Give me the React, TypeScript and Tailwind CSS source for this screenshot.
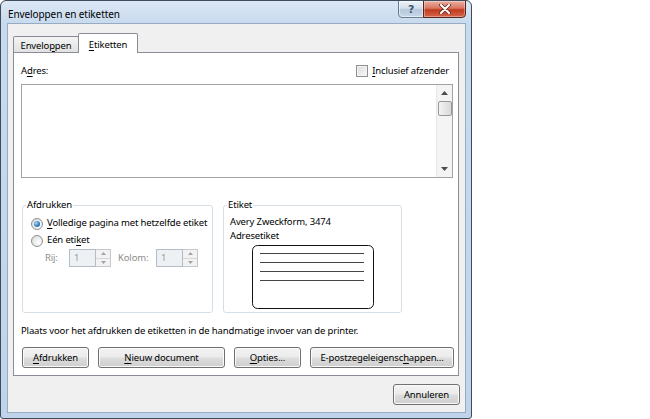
import React from "react";

const U = ({ children }: { children: React.ReactNode }) => (
  <span className="underline underline-offset-[1.5px] decoration-[1px]">{children}</span>
);

function Button({ w, children }: { w: string; children: React.ReactNode }) {
  return (
    <div
      className={`${w} h-[21px] shrink-0 flex items-center justify-center rounded-[3px] border border-[#707070] bg-[linear-gradient(180deg,#f3f3f3_0%,#ebebeb_48%,#dddddd_52%,#cfcfcf_100%)] shadow-[inset_0_0_0_1px_#fafafa] text-black leading-[14px] whitespace-nowrap`}
    >
      <span>{children}</span>
    </div>
  );
}

function Radio({ checked }: { checked?: boolean }) {
  return (
    <span className="w-[12px] h-[12px] shrink-0 rounded-full border border-[#8d8f91] bg-[radial-gradient(circle_at_65%_65%,#ffffff_0%,#e9e9e9_55%,#cfcfcf_100%)] flex items-center justify-center">
      {checked && (
        <span className="w-[6px] h-[6px] rounded-full bg-[radial-gradient(circle_at_35%_35%,#a9dcff_0%,#3b86c9_50%,#174f8c_100%)]" />
      )}
    </span>
  );
}

function Arrow({ up, color = "#4d4d4d" }: { up?: boolean; color?: string }) {
  return (
    <svg width="7" height="4" viewBox="0 0 7 4">
      {up ? <path d="M0 4 L3.5 0 L7 4 Z" fill={color} /> : <path d="M0 0 L3.5 4 L7 0 Z" fill={color} />}
    </svg>
  );
}

function Spin() {
  return (
    <div className="flex h-[18px]">
      <div className="w-[27px] h-full border border-[#b3bdc9] bg-[#eef1f4] text-[#9a9a9a] pl-[4px] flex items-center">1</div>
      <div className="w-[15px] h-full flex flex-col border border-[#c3c8ce] border-l-0 bg-[#f2f2f2]">
        <div className="flex-1 flex items-center justify-center border-b border-[#d3d6da]">
          <svg width="5" height="3" viewBox="0 0 5 3"><path d="M0 3 L2.5 0 L5 3 Z" fill="#a3a3a3" /></svg>
        </div>
        <div className="flex-1 flex items-center justify-center">
          <svg width="5" height="3" viewBox="0 0 5 3"><path d="M0 0 L2.5 3 L5 0 Z" fill="#a3a3a3" /></svg>
        </div>
      </div>
    </div>
  );
}

export default function App() {
  return (
    <div className="w-[650px] h-[419px] bg-white flex font-['Noto_Sans','Open_Sans',sans-serif] text-[9.5px] tracking-[-0.15px] text-black">
      {/* window */}
      <div className="w-[472px] h-[419px] flex flex-col border border-[#3e4b5c] rounded-t-[6px] rounded-b-[3px] overflow-hidden bg-[linear-gradient(180deg,#dce8f5_0px,#c8daee_22px,#bfd4eb_100%)]">
        {/* title bar */}
        <div className="h-[22px] shrink-0 flex items-start justify-between pl-[7px] pr-[5px]">
          <div className="mt-[6px] text-[10px] tracking-[-0.1px] leading-[14px] text-black">Enveloppen en etiketten</div>
          <div className="flex -mt-px">
            <div className="w-[26px] h-[18px] rounded-bl-[4px] border border-[#6a7b92] bg-[linear-gradient(180deg,#eef3f9_0%,#d3deeb_45%,#b7c8dc_55%,#c9d8ea_100%)] flex items-center justify-center shadow-[inset_0_0_0_1px_rgba(255,255,255,0.5)]">
              <span className="font-['DejaVu_Sans',sans-serif] font-bold text-[11px] leading-none text-[#3f5470]">?</span>
            </div>
            <div className="w-[43px] h-[18px] -ml-px rounded-br-[4px] border border-[#5a241b] bg-[linear-gradient(180deg,#eab0a3_0%,#d9755f_45%,#c13a1f_55%,#d4664a_100%)] flex items-center justify-center shadow-[inset_0_0_0_1px_rgba(255,255,255,0.35)]">
              <svg width="12" height="10" viewBox="0 0 12 10">
                <path d="M2 1 L10 9 M10 1 L2 9" stroke="#5b2015" strokeWidth="3.6" strokeLinecap="round" />
                <path d="M2 1 L10 9 M10 1 L2 9" stroke="#ffffff" strokeWidth="2.2" strokeLinecap="round" />
              </svg>
            </div>
          </div>
        </div>

        {/* client area */}
        <div className="flex-1 ml-[6px] mr-[5px] mb-[5px] border border-[#98abc2] bg-[#f0f0f0] flex flex-col pt-[9px] pl-[5px] pr-[6px]">
          {/* tabs */}
          <div className="h-[19px] flex items-end">
            <div className="w-[66px] h-[16px] border border-b-0 border-[#898c95] rounded-t-[2px] bg-[linear-gradient(180deg,#f4f4f4,#e2e2e2)] flex items-center justify-center pt-px leading-[13px]">
              <span>
                Envelo<U>p</U>pen
              </span>
            </div>
            <div className="relative z-10 -ml-px w-[60px] h-[20px] -mb-px border border-b-0 border-[#898c95] rounded-t-[2px] bg-white flex items-center justify-center pt-[2px] leading-[13px]">
              <span>
                <U>E</U>tiketten
              </span>
            </div>
          </div>

          {/* panel */}
          <div className="h-[324px] border border-[#898c95] bg-white flex flex-col pl-[7px] pr-[5px] pt-[11px]">
            <div className="h-[14px] flex items-center justify-between leading-[14px]">
              <span>
                A<U>d</U>res:
              </span>
              <div className="flex items-center gap-[4px] mr-[4px]">
                <span className="w-[12px] h-[12px] border border-[#8e8f8f] bg-[linear-gradient(135deg,#dcdcdc,#f9f9f9)] shadow-[inset_0_0_0_1px_#f4f4f4]" />
                <span>
                  <U>I</U>nclusief afzender
                </span>
              </div>
            </div>

            {/* textarea */}
            <div className="mt-[6px] h-[94px] border border-[#a3a3a3] bg-white flex justify-end">
              <div className="w-[16px] h-full bg-[#f4f4f4] border-l border-[#e6e6e6] flex flex-col items-center">
                <div className="h-[16px] flex items-center justify-center">
                  <Arrow up />
                </div>
                <div className="w-[14px] h-[15px] rounded-[2px] border border-[#979797] bg-[linear-gradient(90deg,#f3f3f3,#e6e6e6_50%,#d9d9d9)]" />
                <div className="flex-1" />
                <div className="h-[16px] flex items-center justify-center">
                  <Arrow />
                </div>
              </div>
            </div>

            {/* groups */}
            <div className="mt-[20px] flex gap-[10px] ml-px">
              <fieldset className="w-[191px] h-[115px] border border-[#d5dfe5] rounded-[3px]">
                <legend className="ml-[3px] px-px leading-[14px]">Afdrukken</legend>
                <div className="pl-[8px] whitespace-nowrap">
                  <div className="mt-[3px] h-[17px] flex items-center gap-[4px]">
                    <Radio checked />
                    <span>
                      <U>V</U>olledige pagina met hetzelfde etiket
                    </span>
                  </div>
                  <div className="h-[17px] flex items-center gap-[4px]">
                    <Radio />
                    <span>
                      Eén eti<U>k</U>et
                    </span>
                  </div>
                  <div className="h-[18px] flex items-center ml-[14px] text-[#8d8d8d]">
                    <span className="w-[24px]">Rij:</span>
                    <Spin />
                    <span className="ml-[7px] w-[38px]">Kolom:</span>
                    <Spin />
                  </div>
                </div>
              </fieldset>
              <fieldset className="w-[179px] h-[115px] border border-[#d5dfe5] rounded-[3px]">
                <legend className="ml-[3px] px-px leading-[14px]">Etiket</legend>
                <div className="pl-[6px] whitespace-nowrap">
                  <div className="mt-[3px] leading-[14px]">Avery Zweckform, 3474</div>
                  <div className="leading-[14px]">Adresetiket</div>
                </div>
                <div className="mt-[2px] flex justify-center">
                  <svg width="122" height="64" viewBox="0 0 122 64">
                    <rect x="0.5" y="0.5" width="121" height="63" rx="5" fill="white" stroke="#111" strokeWidth="1" />
                    <path d="M8 8.5 H112 M8 17.5 H112 M8 26.5 H112 M8 35.5 H112" stroke="#444" strokeWidth="1" />
                  </svg>
                </div>
              </fieldset>
            </div>

            <div className="mt-[11px] leading-[14px] whitespace-nowrap">
              Plaats voor het afdrukken de etiketten in de handmatige invoer van de printer.
            </div>

            <div className="mt-[9px] flex gap-[9px] ml-px">
              <Button w="w-[67px]">
                <U>A</U>fdrukken
              </Button>
              <Button w="w-[127px]">
                <U>N</U>ieuw document
              </Button>
              <Button w="w-[67px]">
                <U>O</U>pties...
              </Button>
              <Button w="w-[144px]">
                E-postzegeleigensc<U>h</U>appen...
              </Button>
            </div>
          </div>

          {/* bottom */}
          <div className="mt-[8px] flex justify-end -mr-px">
            <Button w="w-[67px]">Annuleren</Button>
          </div>
        </div>
      </div>
    </div>
  );
}
